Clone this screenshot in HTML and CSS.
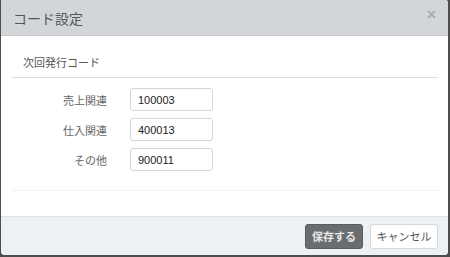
FILE: index.html
```html
<!DOCTYPE html>
<html lang="ja">
<head>
    <meta charset="UTF-8">
    <title>コード設定</title>
    <link rel="stylesheet" href="styles.css">
</head>
<body>
    <div class="modal">
        <div class="modal-header">
            <h4 class="modal-title">コード設定</h4>
            <span class="close">&times;</span>
        </div>
        <div class="modal-body">
            <div class="section">
                <div class="legend">次回発行コード</div>
                <div class="form-row">
                    <label for="sales">売上関連</label>
                    <input type="text" id="sales" value="100003">
                </div>
                <div class="form-row">
                    <label for="purchase">仕入関連</label>
                    <input type="text" id="purchase" value="400013">
                </div>
                <div class="form-row">
                    <label for="other">その他</label>
                    <input type="text" id="other" value="900011">
                </div>
            </div>
        </div>
        <div class="modal-footer">
            <button class="btn btn-save">保存する</button>
            <button class="btn btn-cancel">キャンセル</button>
        </div>
    </div>
</body>
</html>
```

FILE: styles.css
```css
html, body {
    height: 100%;
}

body {
    margin: 0;
    padding: 0 2px 2px 1px;
    box-sizing: border-box;
    background: #4d4d4d;
    font-family: "Liberation Sans", "Noto Sans CJK JP", sans-serif;
    font-size: 11px;
    color: #333;
}

.modal {
    height: 100%;
    background: #fff;
    border-radius: 0 3px 4px 4px;
    overflow: hidden;
    display: flex;
    flex-direction: column;
}

.modal-header {
    height: 35px;
    background: #d3d6d9;
    border-bottom: 1px solid #c4c8cc;
    display: flex;
    align-items: center;
    justify-content: space-between;
    padding: 0 12px;
}

.modal-title {
    margin: 0;
    font-size: 14px;
    font-weight: normal;
    color: #555;
}

.close {
    font-size: 16px;
    font-weight: bold;
    color: #a9adb0;
    margin-top: -6px;
}

.modal-body {
    flex: 1;
    padding: 13px 10px 0 11px;
}

.section {
    border-bottom: 1px solid #f1f2f3;
    padding-bottom: 12px;
}

.legend {
    padding: 5px 0 7px 11px;
    border-bottom: 1px solid #dcdfe2;
    color: #555;
    margin-bottom: 10px;
}

.form-row {
    display: flex;
    align-items: center;
    margin-bottom: 7px;
}

.form-row label {
    width: 95px;
    text-align: right;
    color: #666;
    margin-right: 23px;
}

.form-row input {
    width: 83px;
    height: 23px;
    box-sizing: border-box;
    border: 1px solid #d6d6d6;
    border-radius: 3px;
    padding: 0 7px;
    font-family: "Liberation Sans", sans-serif;
    font-size: 11px;
    color: #222;
}

.modal-footer {
    height: 38px;
    background: #eef1f4;
    border-top: 1px solid #dde2e6;
    display: flex;
    align-items: center;
    justify-content: flex-end;
    gap: 7px;
    padding-right: 10px;
}

.btn {
    height: 25px;
    border-radius: 3px;
    font-family: "Noto Sans CJK JP", sans-serif;
    font-size: 11px;
    padding: 0;
    white-space: nowrap;
}

.btn-save {
    width: 58px;
    background: #6a6d70;
    border: 1px solid #5a5d60;
    color: #e8e8e8;
    font-weight: bold;
}

.btn-cancel {
    width: 68px;
    background: #fff;
    border: 1px solid #d4d8dc;
    color: #555;
}
```
